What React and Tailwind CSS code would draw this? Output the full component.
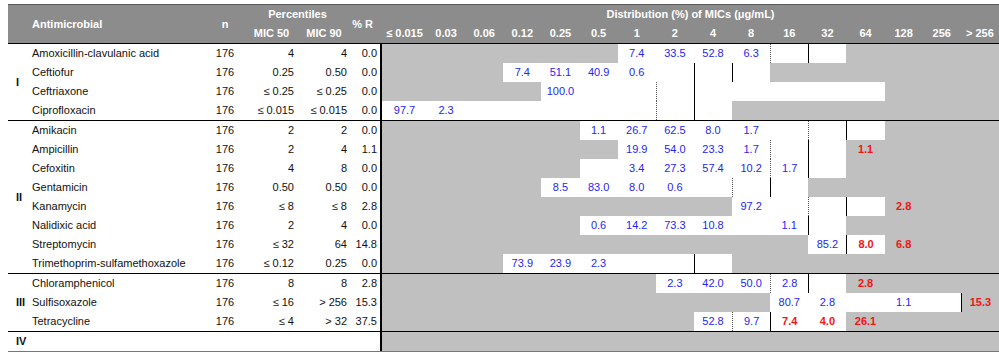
import React from 'react';

const MICS = ['≤ 0.015', '0.03', '0.06', '0.12', '0.25', '0.5', '1', '2', '4', '8', '16', '32', '64', '128', '256', '> 256'];

const groups = [
  {
    label: 'I',
    rows: [
      { name: 'Amoxicillin-clavulanic acid', m50: '4', m90: '4', r: '0.0', white: [6, 11], vals: { 6: '7.4', 7: '33.5', 8: '52.8', 9: '6.3' }, red: {}, solid: [11], dotted: [10] },
      { name: 'Ceftiofur', m50: '0.25', m90: '0.50', r: '0.0', white: [3, 9], vals: { 3: '7.4', 4: '51.1', 5: '40.9', 6: '0.6' }, red: {}, solid: [8, 9], dotted: [] },
      { name: 'Ceftriaxone', m50: '≤ 0.25', m90: '≤ 0.25', r: '0.0', white: [4, 12], vals: { 4: '100.0' }, red: {}, solid: [8], dotted: [7] },
      { name: 'Ciprofloxacin', m50: '≤ 0.015', m90: '≤ 0.015', r: '0.0', white: [0, 8], vals: { 0: '97.7', 1: '2.3' }, red: {}, solid: [8], dotted: [7] },
    ],
  },
  {
    label: 'II',
    rows: [
      { name: 'Amikacin', m50: '2', m90: '2', r: '0.0', white: [5, 12], vals: { 5: '1.1', 6: '26.7', 7: '62.5', 8: '8.0', 9: '1.7' }, red: {}, solid: [12], dotted: [11] },
      { name: 'Ampicillin', m50: '2', m90: '4', r: '1.1', white: [6, 11], vals: { 6: '19.9', 7: '54.0', 8: '23.3', 9: '1.7' }, red: { 12: '1.1' }, solid: [11], dotted: [10] },
      { name: 'Cefoxitin', m50: '4', m90: '8', r: '0.0', white: [5, 11], vals: { 6: '3.4', 7: '27.3', 8: '57.4', 9: '10.2', 10: '1.7' }, red: {}, solid: [11], dotted: [10] },
      { name: 'Gentamicin', m50: '0.50', m90: '0.50', r: '0.0', white: [4, 10], vals: { 4: '8.5', 5: '83.0', 6: '8.0', 7: '0.6' }, red: {}, solid: [10], dotted: [9] },
      { name: 'Kanamycin', m50: '≤ 8', m90: '≤ 8', r: '2.8', white: [9, 12], vals: { 9: '97.2' }, red: { 13: '2.8' }, solid: [12], dotted: [11] },
      { name: 'Nalidixic acid', m50: '2', m90: '4', r: '0.0', white: [5, 11], vals: { 5: '0.6', 6: '14.2', 7: '73.3', 8: '10.8', 10: '1.1' }, red: {}, solid: [11], dotted: [] },
      { name: 'Streptomycin', m50: '≤ 32', m90: '64', r: '14.8', white: [11, 12], vals: { 11: '85.2' }, red: { 12: '8.0', 13: '6.8' }, solid: [12], dotted: [] },
      { name: 'Trimethoprim-sulfamethoxazole', m50: '≤ 0.12', m90: '0.25', r: '0.0', white: [3, 8], vals: { 3: '73.9', 4: '23.9', 5: '2.3' }, red: {}, solid: [8], dotted: [] },
    ],
  },
  {
    label: 'III',
    rows: [
      { name: 'Chloramphenicol', m50: '8', m90: '8', r: '2.8', white: [7, 11], vals: { 7: '2.3', 8: '42.0', 9: '50.0', 10: '2.8' }, red: { 12: '2.8' }, solid: [11], dotted: [10] },
      { name: 'Sulfisoxazole', m50: '≤ 16', m90: '> 256', r: '15.3', white: [10, 14], vals: { 10: '80.7', 11: '2.8', 13: '1.1' }, red: { 15: '15.3' }, solid: [15], dotted: [] },
      { name: 'Tetracycline', m50: '≤ 4', m90: '> 32', r: '37.5', white: [8, 11], vals: { 8: '52.8', 9: '9.7' }, red: { 10: '7.4', 11: '4.0', 12: '26.1' }, solid: [10], dotted: [9] },
    ],
  },
  {
    label: 'IV',
    rows: [{ name: '', m50: '', m90: '', r: '', white: [-1, -1], vals: {}, red: {}, solid: [], dotted: [] }],
  },
];

function DistCell({ row, i }) {
  const white = i >= row.white[0] && i <= row.white[1];
  const solid = row.solid.includes(i);
  const dotted = row.dotted.includes(i);
  let cls = white ? 'bg-white' : 'bg-[#c0c0c0]';
  if (solid) cls += ' border-l border-black';
  else if (dotted) cls += ' border-l border-dotted border-[#555]';
  return (
    <div className={`h-[19px] leading-[19px] text-center ${cls}`}>
      {row.vals[i] && <span className="text-[#2626f2]">{row.vals[i]}</span>}
      {row.red[i] && <span className="text-[#f01414] font-bold">{row.red[i]}</span>}
    </div>
  );
}

function Row({ row }) {
  return (
    <div className="flex h-[19px] leading-[19px] text-[#111]">
      <div className="w-[175px] pl-[2px] whitespace-nowrap">{row.name}</div>
      <div className="w-[40px] text-center">{row.name ? '176' : ''}</div>
      <div className="w-[53px] text-right pr-[4px]">{row.m50}</div>
      <div className="w-[52px] text-right pr-[3px]">{row.m90}</div>
      <div className="w-[30px] text-right pr-[3px]">{row.r}</div>
      <div className="w-[2px] bg-black" />
      <div className="flex-1 grid grid-cols-[45px_repeat(15,minmax(0,1fr))]">
        {MICS.map((_, i) => (
          <DistCell key={i} row={row} i={i} />
        ))}
      </div>
    </div>
  );
}

export default function App() {
  return (
    <div className="w-[999px] h-[352px] bg-white overflow-hidden font-['Liberation_Sans',Arial,sans-serif] text-[11px]">
      <div className="ml-[8px] mt-[4px]">
        {/* header */}
        <div className="flex h-[39px] bg-[#8c8c8c] text-white font-bold border-t border-[#5a5a5a]">
          <div className="w-[197px] pl-[24px] flex items-center">Antimicrobial</div>
          <div className="w-[40px] flex items-center justify-center">n</div>
          <div className="w-[105px] flex flex-col">
            <div className="h-[19px] leading-[19px] text-center">Percentiles</div>
            <div className="flex h-[19px] leading-[19px]">
              <div className="w-[53px] text-center">MIC 50</div>
              <div className="w-[52px] text-center">MIC 90</div>
            </div>
          </div>
          <div className="w-[30px] flex items-center justify-end pr-[7px] whitespace-nowrap">% R</div>
          <div className="w-[2px]" />
          <div className="flex-1 flex flex-col">
            <div className="h-[19px] leading-[19px] text-center">Distribution (%) of MICs (μg/mL)</div>
            <div className="grid grid-cols-[45px_repeat(15,minmax(0,1fr))] h-[19px] leading-[19px]">
              {MICS.map((m) => (
                <div key={m} className="text-center whitespace-nowrap">{m}</div>
              ))}
            </div>
          </div>
        </div>
        <div className="h-px bg-black" />

        {/* body */}
        {groups.map((g, gi) => (
          <div
            key={g.label}
            className={`flex ${gi === groups.length - 1 ? 'border-b-2 border-[#777]' : 'border-b border-black'}`}
          >
            <div className="w-[22px] pl-[8px] flex items-center font-bold text-[#111]">{g.label}</div>
            <div className="flex-1 flex flex-col">
              {g.rows.map((r, ri) => (
                <Row key={ri} row={r} />
              ))}
            </div>
          </div>
        ))}
      </div>
    </div>
  );
}
